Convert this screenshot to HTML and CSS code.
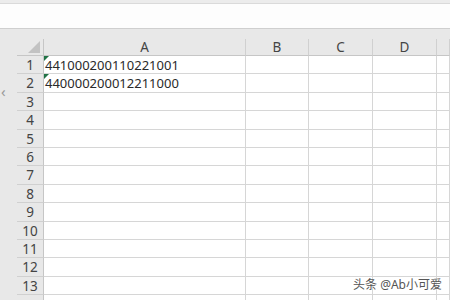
FILE: index.html
```html
<!DOCTYPE html>
<html lang="zh-CN">
<head>
    <meta charset="UTF-8" />
    <title>Sheet</title>
    <link rel="stylesheet" href="styles.css">
</head>
<body>
    <div class="top-strip"></div>
    <div class="formula-bar"></div>
    <div class="workspace">
        <div class="side"><span class="arrow">&lsaquo;</span></div>
        <div class="sheet">
            <div class="grid">
                <div class="corner"><span class="tri"></span></div>
                <div class="col-head">A</div>
                <div class="col-head">B</div>
                <div class="col-head">C</div>
                <div class="col-head">D</div>
                <div class="col-head"></div>

                <div class="row-head">1</div>
                <div class="cell flag">441000200110221001</div>
                <div class="cell"></div><div class="cell"></div><div class="cell"></div><div class="cell"></div>

                <div class="row-head">2</div>
                <div class="cell flag">440000200012211000</div>
                <div class="cell"></div><div class="cell"></div><div class="cell"></div><div class="cell"></div>

                <div class="row-head">3</div>
                <div class="cell"></div><div class="cell"></div><div class="cell"></div><div class="cell"></div><div class="cell"></div>
                <div class="row-head">4</div>
                <div class="cell"></div><div class="cell"></div><div class="cell"></div><div class="cell"></div><div class="cell"></div>
                <div class="row-head">5</div>
                <div class="cell"></div><div class="cell"></div><div class="cell"></div><div class="cell"></div><div class="cell"></div>
                <div class="row-head">6</div>
                <div class="cell"></div><div class="cell"></div><div class="cell"></div><div class="cell"></div><div class="cell"></div>
                <div class="row-head">7</div>
                <div class="cell"></div><div class="cell"></div><div class="cell"></div><div class="cell"></div><div class="cell"></div>
                <div class="row-head">8</div>
                <div class="cell"></div><div class="cell"></div><div class="cell"></div><div class="cell"></div><div class="cell"></div>
                <div class="row-head">9</div>
                <div class="cell"></div><div class="cell"></div><div class="cell"></div><div class="cell"></div><div class="cell"></div>
                <div class="row-head">10</div>
                <div class="cell"></div><div class="cell"></div><div class="cell"></div><div class="cell"></div><div class="cell"></div>
                <div class="row-head">11</div>
                <div class="cell"></div><div class="cell"></div><div class="cell"></div><div class="cell"></div><div class="cell"></div>
                <div class="row-head">12</div>
                <div class="cell"></div><div class="cell"></div><div class="cell"></div><div class="cell"></div><div class="cell"></div>
                <div class="row-head">13</div>
                <div class="cell"></div><div class="cell"></div><div class="cell"></div><div class="cell"></div><div class="cell"></div>
                <div class="row-head"></div>
                <div class="cell"></div><div class="cell"></div><div class="cell"></div><div class="cell"></div><div class="cell"></div>
            </div>
        </div>
    </div>
    <div class="watermark">头条 @Ab小可爱</div>
</body>
</html>
```

FILE: styles.css
```css
:root{
    --gray: #e8e8e8;
    --line: #d6d6d6;
    --head-line: #c6c6c6;
    --text: #333333;
}

*{
    margin: 0;
    padding: 0;
    box-sizing: border-box;
}
body{
    width: 450px;
    height: 300px;
    overflow: hidden;
    background-color: var(--gray);
    font-family: "Noto Sans", "Noto Sans CJK SC", sans-serif;
    color: var(--text);
}
.top-strip{
    height: 4px;
    background-color: #ececec;
    border-bottom: 1px solid #dadada;
}
.formula-bar{
    height: 25px;
    background-color: #fdfdfd;
    border-bottom: 1px solid #cfcfcf;
}
.workspace{
    display: flex;
}
.side{
    width: 17px;
    padding-top: 55px;
    color: #9a9a9a;
    font-size: 15px;
    line-height: 1;
}
.arrow{
    display: block;
    padding-left: 1px;
}
.sheet{
    flex: 1;
    padding-top: 10px;
}
.grid{
    display: grid;
    grid-template-columns: 27px 202px 63px 64px 64px 1fr;
    grid-template-rows: 17px repeat(14, 18.4px);
    background-color: #ffffff;
}
.corner, .col-head{
    background-color: var(--gray);
    border-bottom: 1px solid var(--head-line);
    border-right: 1px solid #d0d0d0;
}
.corner{
    position: relative;
    border-right-color: var(--head-line);
}
.tri{
    position: absolute;
    right: 3px;
    bottom: 2px;
    width: 0;
    height: 0;
    border-left: 12px solid transparent;
    border-bottom: 12px solid #c2c2c2;
}
.col-head{
    font-size: 13.5px;
    line-height: 16px;
    text-align: center;
    color: #444444;
}
.row-head{
    background-color: var(--gray);
    border-right: 1px solid var(--head-line);
    border-bottom: 1px solid #d0d0d0;
    font-size: 13.5px;
    line-height: 18px;
    text-align: center;
    color: #444444;
}
.cell{
    border-right: 1px solid var(--line);
    border-bottom: 1px solid var(--line);
    font-size: 13px;
    line-height: 18px;
    padding-left: 1px;
    color: #2a2a2a;
    white-space: nowrap;
}
.flag{
    position: relative;
}
.flag::before{
    content: "";
    position: absolute;
    left: 0;
    top: 0;
    border-top: 5px solid #217346;
    border-right: 5px solid transparent;
}
.watermark{
    position: absolute;
    right: 8px;
    top: 275px;
    font-size: 12px;
    color: #555555;
    text-shadow: 0 0 2px #ffffff;
}
```
